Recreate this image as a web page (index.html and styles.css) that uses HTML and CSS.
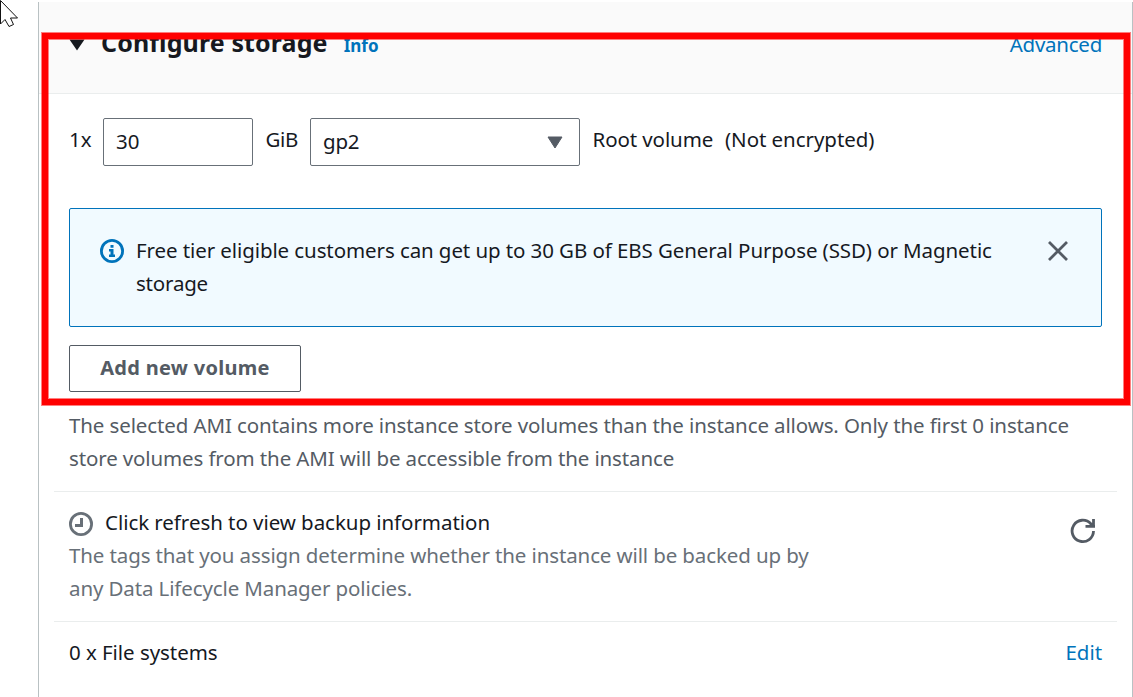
FILE: index.html
```html
<!DOCTYPE html>
<html lang="en">
<head>
<meta charset="utf-8">
<title>Configure storage</title>
<link rel="stylesheet" href="styles.css">
</head>
<body>
<main class="panel">
  <header class="panel-header">
    <svg class="caret" width="16" height="12" viewBox="0 0 16 12"><path d="M.5 .5H15.500L8 11.500Z" fill="#16191f"/></svg>
    <h2 class="title"><span>Configure storage</span></h2>
    <a class="info"><span>Info</span></a>
    <a class="advanced"><span>Advanced</span></a>
  </header>
  <section class="content">
    <div class="volume">
      <span class="count">1x</span>
      <div class="field size">30</div>
      <span class="unit">GiB</span>
      <div class="field type"><span>gp2</span><svg width="16" height="13" viewBox="0 0 16 13"><path d="M1 1H15L8 12Z" fill="#545b64" stroke="#545b64" stroke-linejoin="round"/></svg></div>
      <span class="root">Root volume</span>
      <span class="encryption">(Not encrypted)</span>
    </div>
    <div class="alert">
      <svg class="alert-icon" width="24" height="24" viewBox="0 0 24 24"><circle cx="12" cy="12" r="10.6" fill="none" stroke="#0073bb" stroke-width="2.8"/><path d="M10.500 6h3v2.800h-3zM9 10h4.500v5.500H15V18H9v-2.500h1.500v-3H9z" fill="#0073bb"/></svg>
      <p class="alert-text"><span>Free tier eligible customers can get up to 30 GB of EBS General Purpose (SSD) or Magnetic</span><br><span class="alert-rest">storage</span></p>
      <svg class="close" width="20" height="20" viewBox="0 0 20 20"><path d="M1 1L19 19M19 1L1 19" stroke="#545b64" stroke-width="2.8"/></svg>
    </div>
    <button class="add"><span>Add new volume</span></button>
    <p class="note"><span>The selected AMI contains more instance store volumes than the instance allows. Only the first 0 instance</span><br><span class="note-rest">store volumes from the AMI will be accessible from the instance</span></p>
  </section>
  <section class="backup">
    <div>
      <div class="backup-title"><svg width="24" height="24" viewBox="0 0 24 24"><circle cx="12" cy="12" r="10.600" fill="none" stroke="#687078" stroke-width="2.800"/><path d="M12.500 6v7.500H6" fill="none" stroke="#687078" stroke-width="3"/></svg><span>Click refresh to view backup information</span></div>
      <p class="backup-text"><span>The tags that you assign determine whether the instance will be backed up by</span><br><span>any Data Lifecycle Manager policies.</span></p>
    </div>
    <svg class="refresh" width="26" height="26" viewBox="0 0 26 26"><path d="M23.500 13A10.700 10.700 0 1 1 20.800 5.800L23 8.500M15.500 8.300H25M23.500 1V9.600" fill="none" stroke="#545b64" stroke-width="2.8"/></svg>
  </section>
  <section class="files"><span>0 x File systems</span><a class="edit"><span>Edit</span></a></section>
</main>
<div class="highlight"></div>
<svg class="cursor" width="20" height="28" viewBox="0 0 20 28"><path d="M.5 .5V24L5 19.500L9 26.500L13.500 24.500L10.500 18H17.500Z" fill="#fff" stroke="#111"/></svg>
</body>
</html>
```
FILE: styles.css
```css
* { box-sizing: border-box; }
body { margin: 0; height: 697px; overflow: hidden; background: #fff; color: #16191f; font: 20.5px/33px "Noto Sans", "Open Sans", sans-serif; }
p, h2 { margin: 0; }
span { white-space: nowrap; }
svg { display: block; flex: none; }
a { color: #0073bb; }
.panel { margin: 2px 0 0 38px; width: 1095px; height: 695px; border: solid #b9c1c3; border-width: 0 1px; }
.panel-header { height: 92px; padding: 26px 30px 0; background: #fafafa; border-bottom: 1px solid #eaeded; display: flex; }
.caret { margin: 11px 16px 0 0; }
.title { font-size: 25px; font-weight: 700; line-height: 29px; letter-spacing: .12px; }
.info { margin: 1px 0 0 16px; font-size: 17px; font-weight: 700; }
.advanced { margin-left: auto; letter-spacing: -.25px; }
.content { margin: 0 15px; padding: 24px 15px 0; height: 398px; border-bottom: 1px solid #eaeded; }
.volume { display: flex; }
.count { width: 34px; padding-top: 5px; }
.field { height: 48px; border: 1px solid #687078; border-radius: 2px; padding: 6px 12px; }
.size { width: 150px; }
.unit { width: 57px; padding: 5px 0 0 12.5px; letter-spacing: -.3px; }
.type { width: 270px; display: flex; justify-content: space-between; padding-right: 16px; letter-spacing: -.2px; }
.type svg { margin-top: 11px; }
.root { width: 145px; padding: 5px 0 0 12.5px; letter-spacing: -.1px; }
.encryption { padding-top: 5px; letter-spacing: -.05px; }
.alert { margin-top: 42px; height: 119px; padding: 25px 33px 0 30px; border: 1px solid #0073bb; border-radius: 2px; background: #f1faff; display: flex; }
.alert-icon { margin: 5px 12px 0 0; }
.alert-text { letter-spacing: -.09px; }
.alert-rest { letter-spacing: -.2px; }
.close { margin: 7px 0 0 auto; }
.add { display: block; margin-top: 18px; width: 232px; height: 47px; padding: 0 0 2px; background: #fff; border: 1px solid #545b64; border-radius: 2px; color: #545b64; font: 700 20px/43px "Noto Sans", sans-serif; letter-spacing: .3px; }
.note { margin-top: 17px; color: #545b64; letter-spacing: -.114px; }
.note-rest { letter-spacing: -.127px; }
.backup { margin: 0 15px; padding: 14px 21px 0 15px; height: 130px; border-bottom: 1px solid #eaeded; display: flex; justify-content: space-between; }
.backup-title { display: flex; gap: 12px; letter-spacing: -.05px; }
.backup-title svg { margin-top: 6px; }
.backup-text { color: #687078; letter-spacing: -.12px; }
.refresh { margin-top: 12px; }
.files { padding: 14px 30px 0; display: flex; justify-content: space-between; letter-spacing: -.05px; }
.highlight { position: absolute; left: 42px; top: 33px; width: 1088px; height: 372px; border: 6px solid #f00; box-shadow: 0 0 0 1px rgba(255, 0, 0, .5), inset 0 0 0 1px rgba(255, 0, 0, .5); }
.cursor { position: absolute; left: 0; top: 0; }
```
